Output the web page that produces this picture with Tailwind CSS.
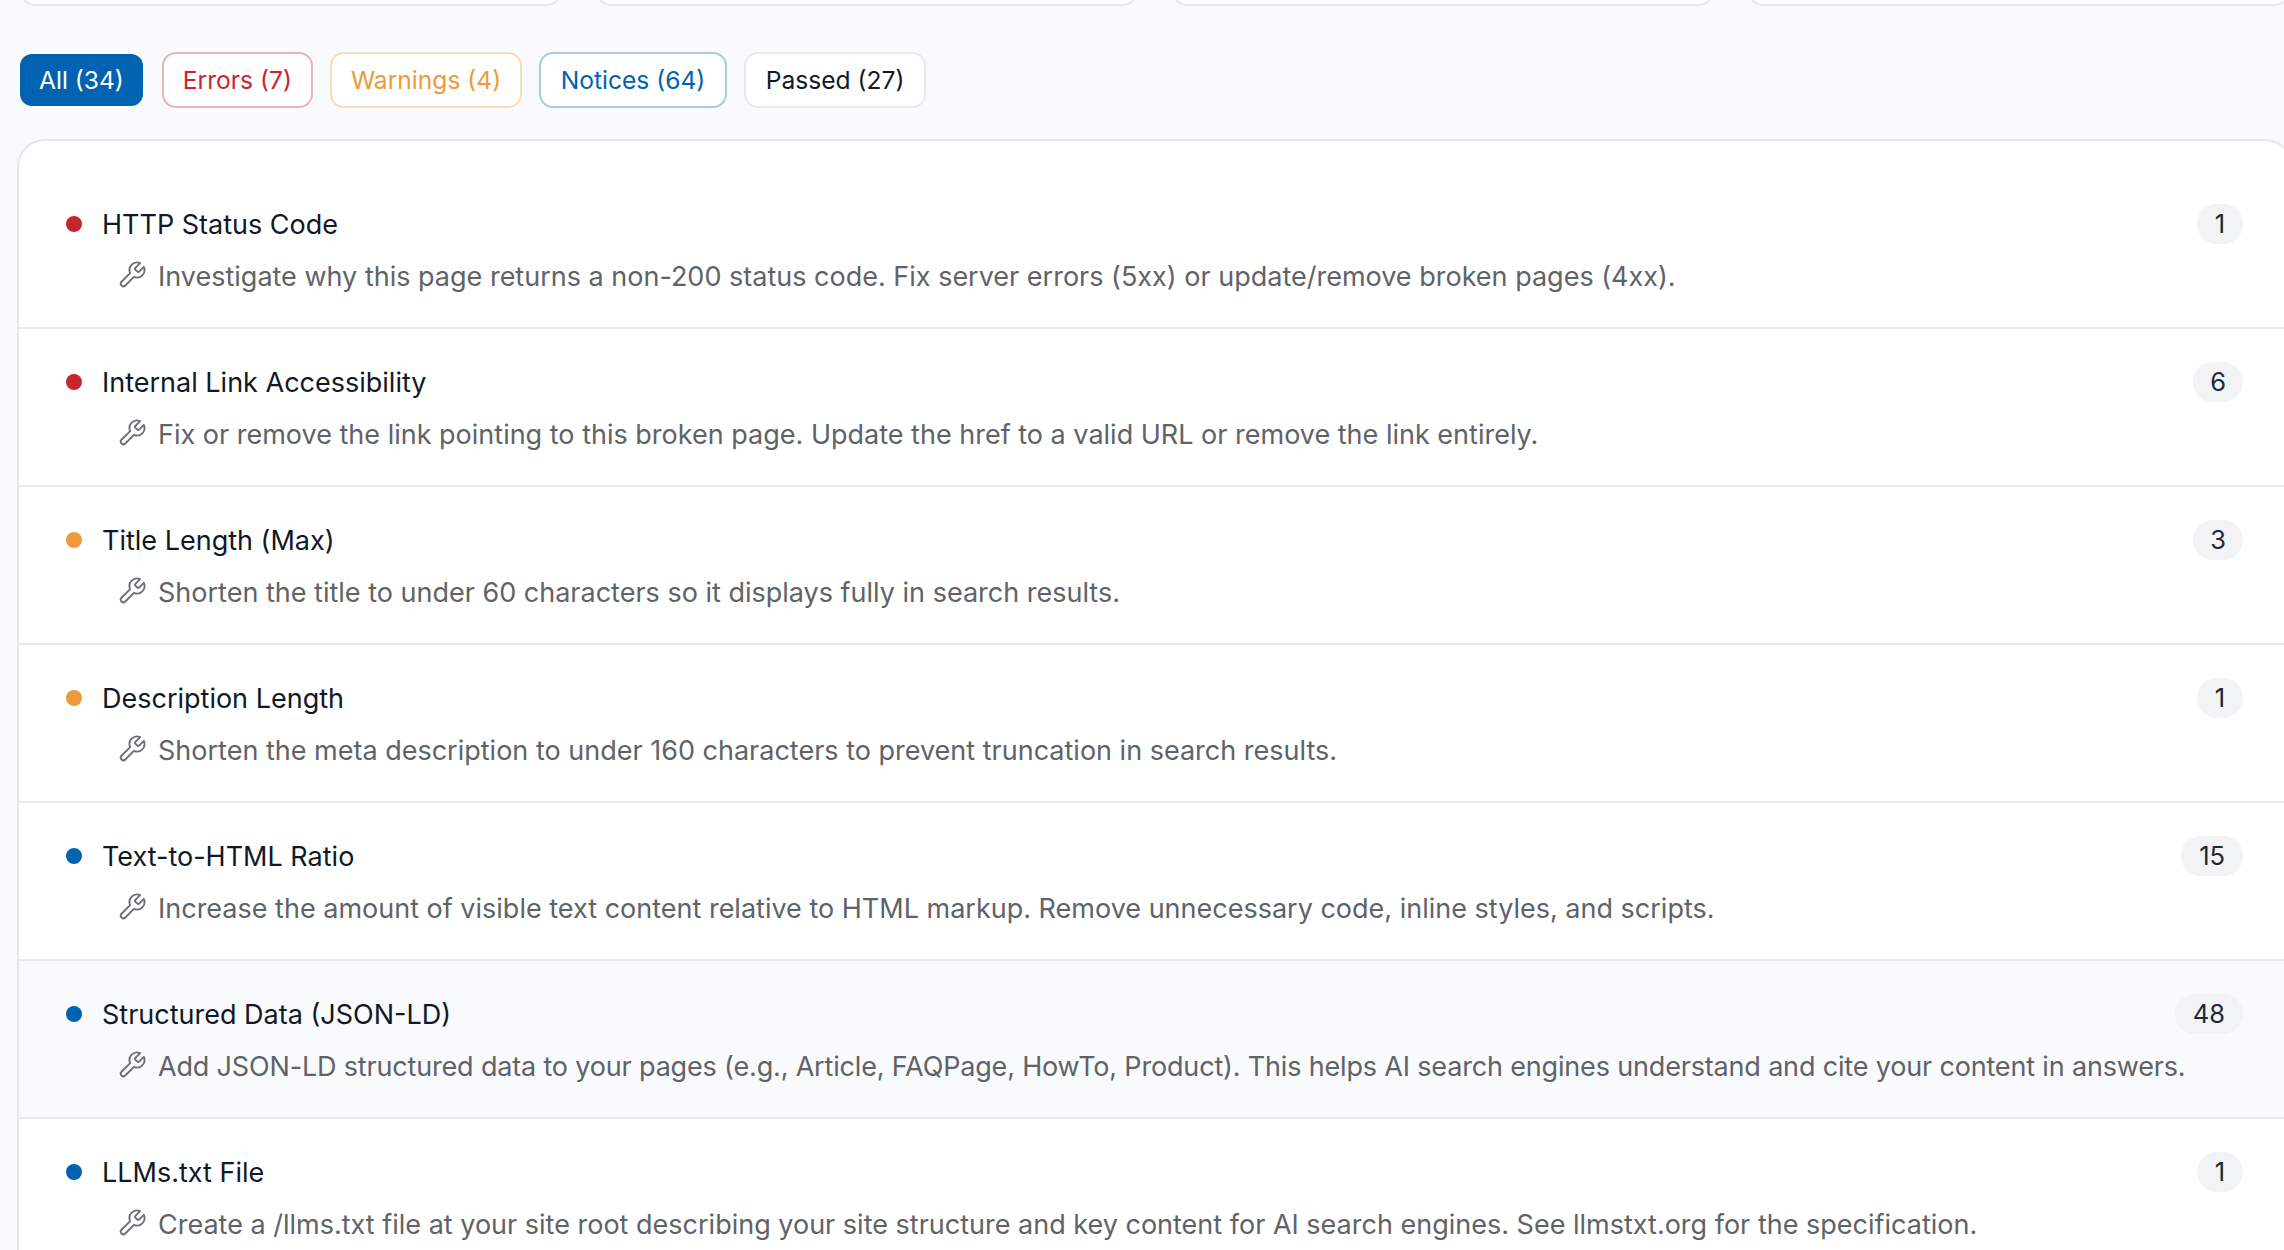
<!DOCTYPE html>
<html lang="en">
<head>
    <meta charset="UTF-8">
    <title>Issues</title>
    <script src="https://cdn.jsdelivr.net/npm/@tailwindcss/browser@4"></script>
</head>
<body class="bg-[#f9fafc] font-['Inter',sans-serif] overflow-hidden h-[1250px] w-[2284px]">
    <div class="w-[2276px] ml-[17px]">
        <!-- stat cards, cut off by the top of the page -->
        <div class="grid grid-cols-4 gap-[28px] -mt-[34px]">
            <div class="h-[40px] rounded-[28px] border-2 border-[#e5e7eb] bg-white"></div>
            <div class="h-[40px] rounded-[28px] border-2 border-[#e5e7eb] bg-white"></div>
            <div class="h-[40px] rounded-[28px] border-2 border-[#e5e7eb] bg-white"></div>
            <div class="h-[40px] rounded-[28px] border-2 border-[#e5e7eb] bg-white"></div>
        </div>

        <div class="flex items-center gap-[17px] mt-[46px] ml-[3px] text-[24.6px] h-[56px]">
            <button class="h-[52px] px-[19px] mr-[2px] rounded-[12px] bg-[#0062b1] text-white">All (34)</button>
            <button class="h-[56px] px-[19px] rounded-[14px] border-2 border-[#eab4b7] bg-white text-[#c9252d]">Errors (7)</button>
            <button class="h-[56px] px-[19px] rounded-[14px] border-2 border-[#f9dcb8] bg-white text-[#ee9a3a]">Warnings (4)</button>
            <button class="h-[56px] px-[19.5px] rounded-[14px] border-2 border-[#a9c9e4] bg-white text-[#0062b1]">Notices (64)</button>
            <button class="h-[56px] px-[20px] rounded-[14px] border-2 border-[#e7e9ec] bg-white text-[#111827]">Passed (27)</button>
        </div>

        <div class="mt-[31px] bg-white border-2 border-[#e5e7eb] rounded-[28px] pt-[30px] h-[1300px]">
            <div class="h-[158px] border-b-2 border-[#e7e9ec] pl-[47px] pr-[48px] pt-[33px]">
                <div class="flex items-center h-[40px]">
                    <span class="w-[16px] h-[16px] rounded-full bg-[#c9252d]"></span>
                    <span class="ml-[20px] mt-[2px] text-[27px] text-[#111827]">HTTP Status Code</span>
                    <span class="ml-auto h-[40px] min-w-[46px] px-[16px] rounded-full bg-[#f1f3f5] text-[25.5px] text-[#1f2937] flex items-center justify-center">1</span>
                </div>
                <div class="flex items-center h-[36px] mt-[15px] ml-[51px] text-[27px] text-[#5f6368]">
                    <svg class="w-[30px] h-[30px] -mt-[4px] mr-[11px] shrink-0" viewBox="0 0 24 24" fill="none" stroke="#6b7076" stroke-width="1.5" stroke-linecap="round" stroke-linejoin="round"><path d="M14.7 6.3a1 1 0 0 0 0 1.4l1.6 1.6a1 1 0 0 0 1.4 0l3.77-3.77a6 6 0 0 1-7.94 7.94l-6.91 6.91a2.12 2.12 0 0 1-3-3l6.91-6.91a6 6 0 0 1 7.94-7.94l-3.76 3.76z"/></svg>
                    <span>Investigate why this page returns a non-200 status code. Fix server errors (5xx) or update/remove broken pages (4xx).</span>
                </div>
            </div>
            <div class="h-[158px] border-b-2 border-[#e7e9ec] pl-[47px] pr-[48px] pt-[33px]">
                <div class="flex items-center h-[40px]">
                    <span class="w-[16px] h-[16px] rounded-full bg-[#c9252d]"></span>
                    <span class="ml-[20px] mt-[2px] text-[27px] text-[#111827]">Internal Link Accessibility</span>
                    <span class="ml-auto h-[40px] min-w-[46px] px-[17px] rounded-full bg-[#f1f3f5] text-[25.5px] text-[#1f2937] flex items-center justify-center">6</span>
                </div>
                <div class="flex items-center h-[36px] mt-[15px] ml-[51px] text-[27px] text-[#5f6368]">
                    <svg class="w-[30px] h-[30px] -mt-[4px] mr-[11px] shrink-0" viewBox="0 0 24 24" fill="none" stroke="#6b7076" stroke-width="1.5" stroke-linecap="round" stroke-linejoin="round"><path d="M14.7 6.3a1 1 0 0 0 0 1.4l1.6 1.6a1 1 0 0 0 1.4 0l3.77-3.77a6 6 0 0 1-7.94 7.94l-6.91 6.91a2.12 2.12 0 0 1-3-3l6.91-6.91a6 6 0 0 1 7.94-7.94l-3.76 3.76z"/></svg>
                    <span>Fix or remove the link pointing to this broken page. Update the href to a valid URL or remove the link entirely.</span>
                </div>
            </div>
            <div class="h-[158px] border-b-2 border-[#e7e9ec] pl-[47px] pr-[48px] pt-[33px]">
                <div class="flex items-center h-[40px]">
                    <span class="w-[16px] h-[16px] rounded-full bg-[#ee9a3a]"></span>
                    <span class="ml-[20px] mt-[2px] text-[27px] text-[#111827]">Title Length (Max)</span>
                    <span class="ml-auto h-[40px] min-w-[46px] px-[17px] rounded-full bg-[#f1f3f5] text-[25.5px] text-[#1f2937] flex items-center justify-center">3</span>
                </div>
                <div class="flex items-center h-[36px] mt-[15px] ml-[51px] text-[27px] text-[#5f6368]">
                    <svg class="w-[30px] h-[30px] -mt-[4px] mr-[11px] shrink-0" viewBox="0 0 24 24" fill="none" stroke="#6b7076" stroke-width="1.5" stroke-linecap="round" stroke-linejoin="round"><path d="M14.7 6.3a1 1 0 0 0 0 1.4l1.6 1.6a1 1 0 0 0 1.4 0l3.77-3.77a6 6 0 0 1-7.94 7.94l-6.91 6.91a2.12 2.12 0 0 1-3-3l6.91-6.91a6 6 0 0 1 7.94-7.94l-3.76 3.76z"/></svg>
                    <span>Shorten the title to under 60 characters so it displays fully in search results.</span>
                </div>
            </div>
            <div class="h-[158px] border-b-2 border-[#e7e9ec] pl-[47px] pr-[48px] pt-[33px]">
                <div class="flex items-center h-[40px]">
                    <span class="w-[16px] h-[16px] rounded-full bg-[#ee9a3a]"></span>
                    <span class="ml-[20px] mt-[2px] text-[27px] text-[#111827]">Description Length</span>
                    <span class="ml-auto h-[40px] min-w-[46px] px-[16px] rounded-full bg-[#f1f3f5] text-[25.5px] text-[#1f2937] flex items-center justify-center">1</span>
                </div>
                <div class="flex items-center h-[36px] mt-[15px] ml-[51px] text-[27px] text-[#5f6368]">
                    <svg class="w-[30px] h-[30px] -mt-[4px] mr-[11px] shrink-0" viewBox="0 0 24 24" fill="none" stroke="#6b7076" stroke-width="1.5" stroke-linecap="round" stroke-linejoin="round"><path d="M14.7 6.3a1 1 0 0 0 0 1.4l1.6 1.6a1 1 0 0 0 1.4 0l3.77-3.77a6 6 0 0 1-7.94 7.94l-6.91 6.91a2.12 2.12 0 0 1-3-3l6.91-6.91a6 6 0 0 1 7.94-7.94l-3.76 3.76z"/></svg>
                    <span>Shorten the meta description to under 160 characters to prevent truncation in search results.</span>
                </div>
            </div>
            <div class="h-[158px] border-b-2 border-[#e7e9ec] pl-[47px] pr-[48px] pt-[33px]">
                <div class="flex items-center h-[40px]">
                    <span class="w-[16px] h-[16px] rounded-full bg-[#0062b1]"></span>
                    <span class="ml-[20px] mt-[2px] text-[27px] text-[#111827]">Text-to-HTML Ratio</span>
                    <span class="ml-auto h-[40px] min-w-[46px] px-[18px] rounded-full bg-[#f1f3f5] text-[25.5px] text-[#1f2937] flex items-center justify-center">15</span>
                </div>
                <div class="flex items-center h-[36px] mt-[15px] ml-[51px] text-[27px] text-[#5f6368]">
                    <svg class="w-[30px] h-[30px] -mt-[4px] mr-[11px] shrink-0" viewBox="0 0 24 24" fill="none" stroke="#6b7076" stroke-width="1.5" stroke-linecap="round" stroke-linejoin="round"><path d="M14.7 6.3a1 1 0 0 0 0 1.4l1.6 1.6a1 1 0 0 0 1.4 0l3.77-3.77a6 6 0 0 1-7.94 7.94l-6.91 6.91a2.12 2.12 0 0 1-3-3l6.91-6.91a6 6 0 0 1 7.94-7.94l-3.76 3.76z"/></svg>
                    <span>Increase the amount of visible text content relative to HTML markup. Remove unnecessary code, inline styles, and scripts.</span>
                </div>
            </div>
            <div class="h-[158px] border-b-2 border-[#e7e9ec] pl-[47px] pr-[48px] pt-[33px] bg-[#f8fafc]">
                <div class="flex items-center h-[40px]">
                    <span class="w-[16px] h-[16px] rounded-full bg-[#0062b1]"></span>
                    <span class="ml-[20px] mt-[2px] text-[27px] text-[#111827]">Structured Data (JSON-LD)</span>
                    <span class="ml-auto h-[40px] min-w-[46px] px-[18px] rounded-full bg-[#f1f3f5] text-[25.5px] text-[#1f2937] flex items-center justify-center">48</span>
                </div>
                <div class="flex items-center h-[36px] mt-[15px] ml-[51px] text-[27px] text-[#5f6368]">
                    <svg class="w-[30px] h-[30px] -mt-[4px] mr-[11px] shrink-0" viewBox="0 0 24 24" fill="none" stroke="#6b7076" stroke-width="1.5" stroke-linecap="round" stroke-linejoin="round"><path d="M14.7 6.3a1 1 0 0 0 0 1.4l1.6 1.6a1 1 0 0 0 1.4 0l3.77-3.77a6 6 0 0 1-7.94 7.94l-6.91 6.91a2.12 2.12 0 0 1-3-3l6.91-6.91a6 6 0 0 1 7.94-7.94l-3.76 3.76z"/></svg>
                    <span class="tracking-[-0.17px]">Add JSON-LD structured data to your pages (e.g., Article, FAQPage, HowTo, Product). This helps AI search engines understand and cite your content in answers.</span>
                </div>
            </div>
            <div class="h-[158px] border-b-2 border-[#e7e9ec] pl-[47px] pr-[48px] pt-[33px]">
                <div class="flex items-center h-[40px]">
                    <span class="w-[16px] h-[16px] rounded-full bg-[#0062b1]"></span>
                    <span class="ml-[20px] mt-[2px] text-[27px] text-[#111827]">LLMs.txt File</span>
                    <span class="ml-auto h-[40px] min-w-[46px] px-[16px] rounded-full bg-[#f1f3f5] text-[25.5px] text-[#1f2937] flex items-center justify-center">1</span>
                </div>
                <div class="flex items-center h-[36px] mt-[15px] ml-[51px] text-[27px] text-[#5f6368]">
                    <svg class="w-[30px] h-[30px] -mt-[4px] mr-[11px] shrink-0" viewBox="0 0 24 24" fill="none" stroke="#6b7076" stroke-width="1.5" stroke-linecap="round" stroke-linejoin="round"><path d="M14.7 6.3a1 1 0 0 0 0 1.4l1.6 1.6a1 1 0 0 0 1.4 0l3.77-3.77a6 6 0 0 1-7.94 7.94l-6.91 6.91a2.12 2.12 0 0 1-3-3l6.91-6.91a6 6 0 0 1 7.94-7.94l-3.76 3.76z"/></svg>
                    <span>Create a /llms.txt file at your site root describing your site structure and key content for AI search engines. See llmstxt.org for the specification.</span>
                </div>
            </div>
        </div>
    </div>
</body>
</html>
